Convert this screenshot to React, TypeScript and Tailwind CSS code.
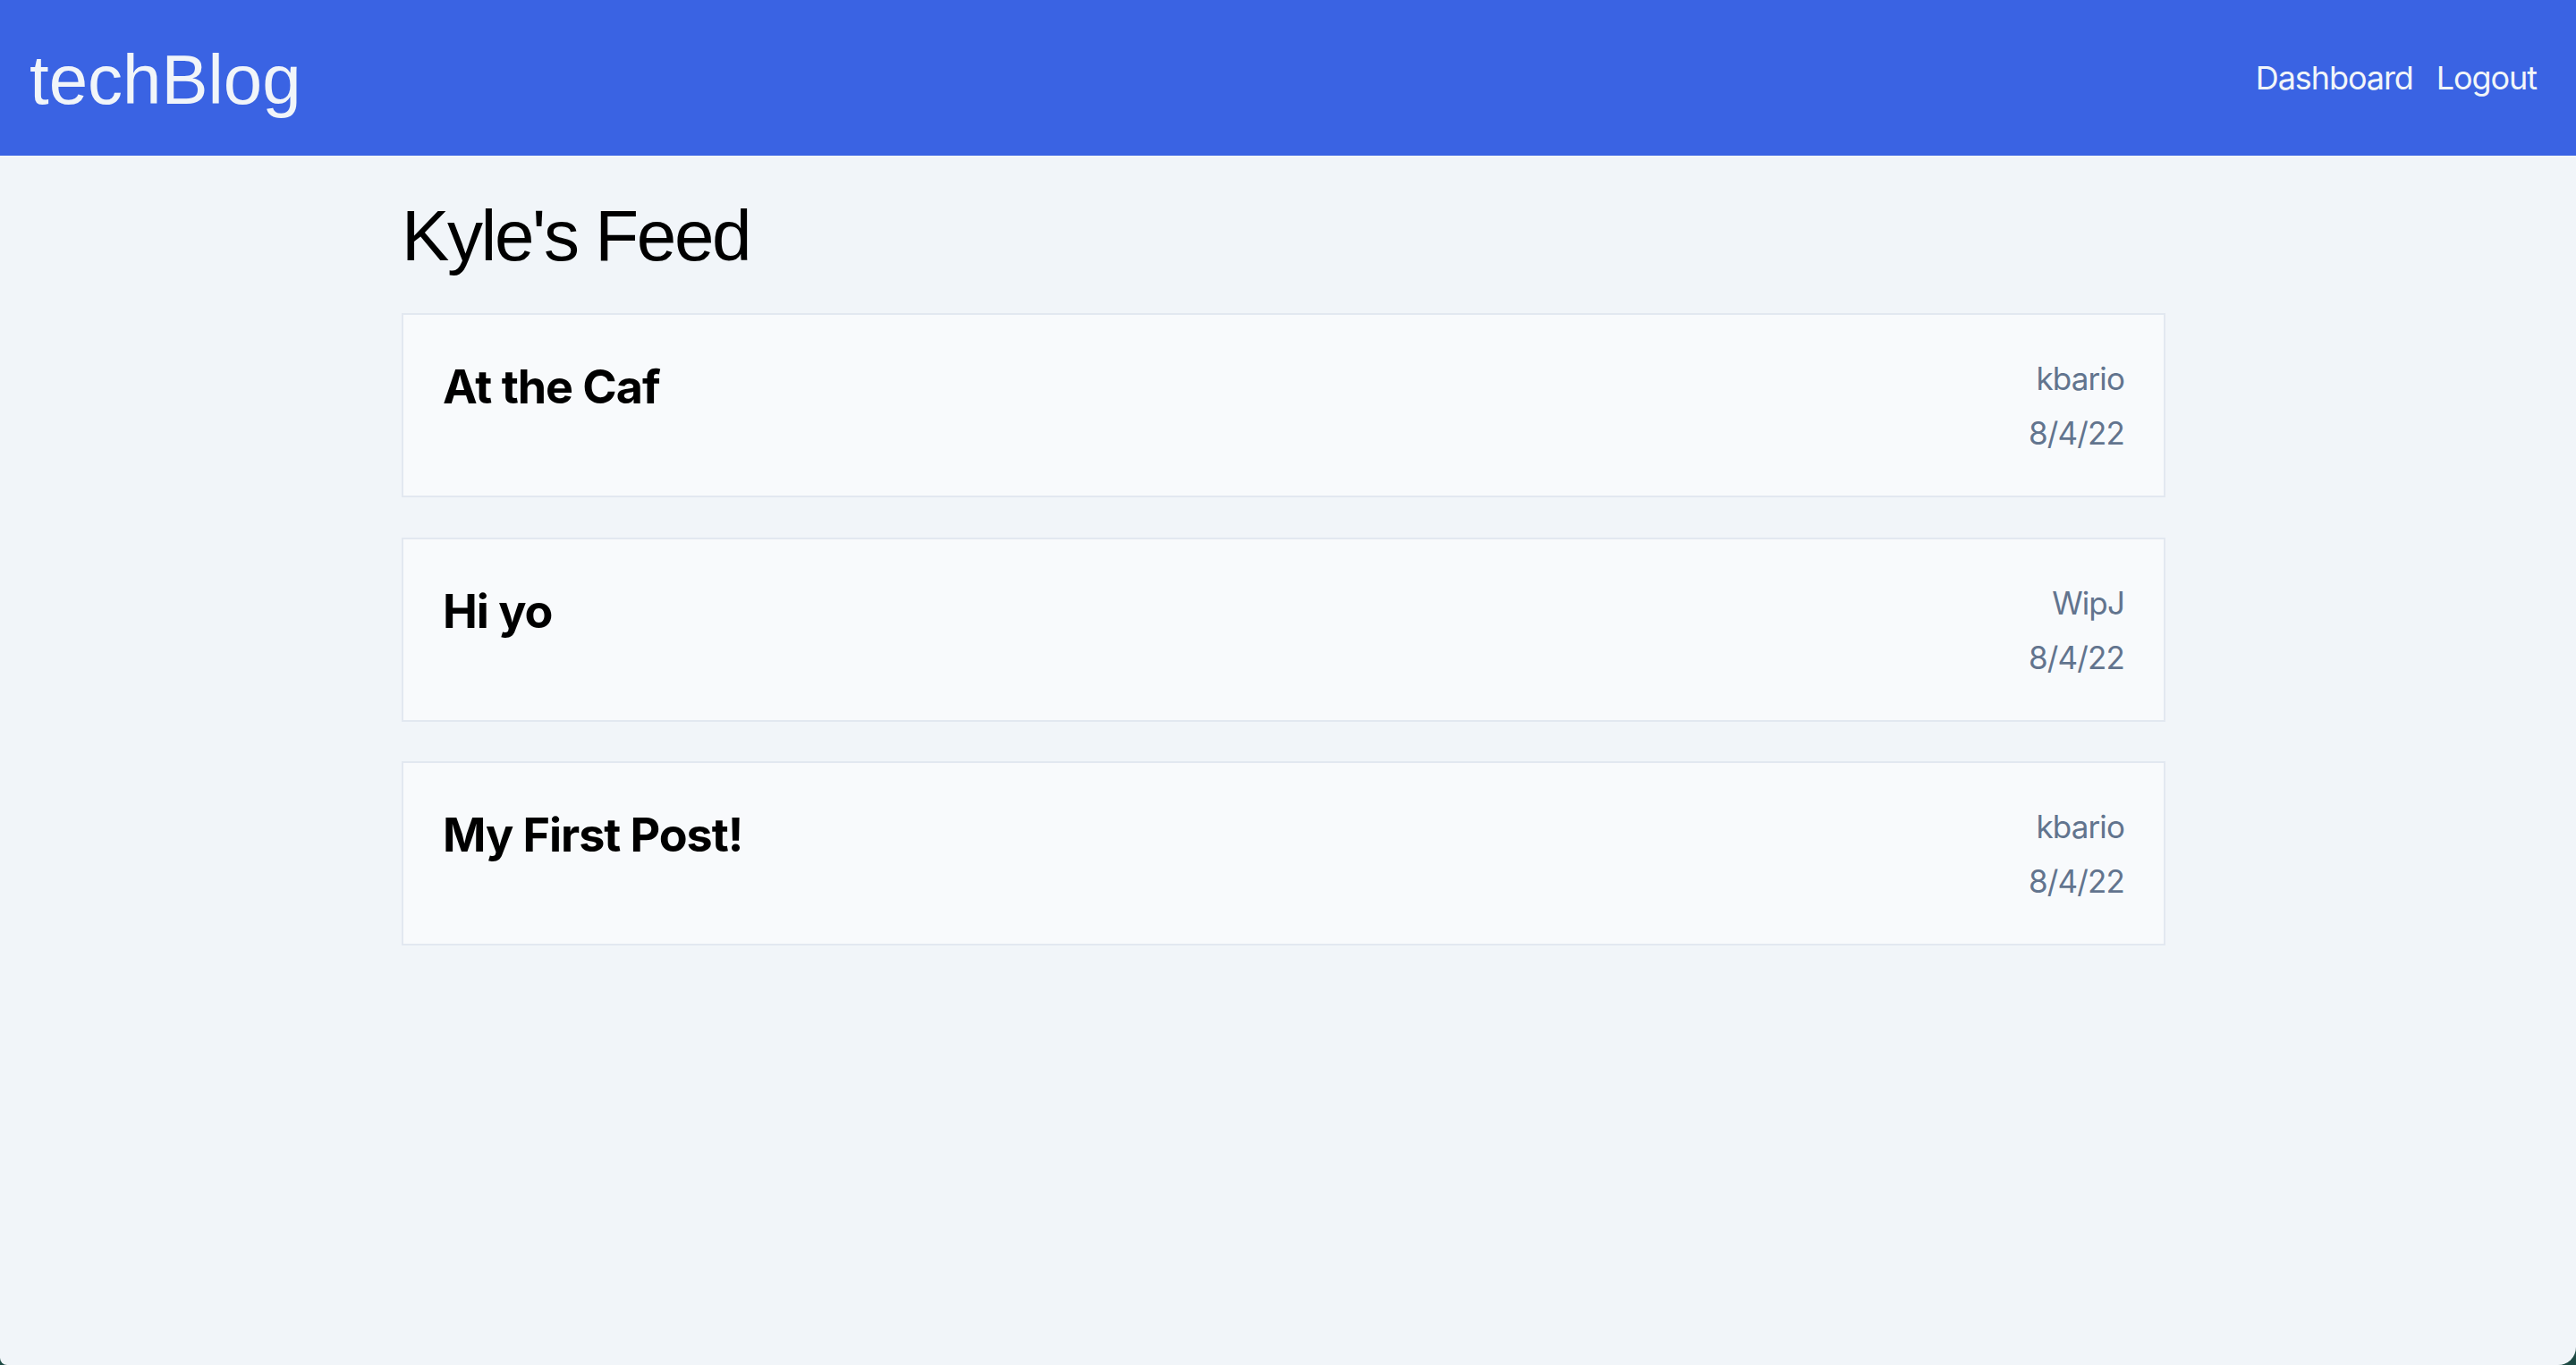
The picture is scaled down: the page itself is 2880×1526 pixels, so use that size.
const posts = [
  { id: 1, title: "At the Caf", author: "kbario", date: "8/4/22" },
  { id: 2, title: "Hi yo", author: "WipJ", date: "8/4/22" },
  { id: 3, title: "My First Post!", author: "kbario", date: "8/4/22" },
];

function PostCard({ title, author, date }: { title: string; author: string; date: string }) {
  return (
    <div className="flex justify-between h-[206px] border-2 border-slate-200 bg-slate-50 px-[44px] pt-[41px]">
      <h2 className="mt-[5px] text-[52px] leading-[70px] font-bold tracking-[-0.02em] text-black font-['Inter',sans-serif]">
        {title}
      </h2>
      <div className="text-right text-[35px] leading-[61px] tracking-[-0.025em] text-slate-500 font-['Inter',sans-serif]">
        <div>{author}</div>
        <div>{date}</div>
      </div>
    </div>
  );
}

export default function App() {
  return (
    <div className="h-screen bg-[#1d4a44]">
      <div className="h-full bg-slate-100 rounded-br-[20px] rounded-bl-[8px] overflow-hidden">
        <header className="flex items-center justify-between h-[174px] bg-[#3a63e3] pl-[33px] pr-[44px]">
          <h1 className="mt-[4px] text-[78px] leading-none text-slate-100 font-['Liberation_Sans',Arial,sans-serif]">
            techBlog
          </h1>
          <nav className="flex items-center gap-[26px] text-[36px] text-slate-100 font-['Inter',sans-serif] tracking-[-0.03em]">
            <a href="#">Dashboard</a>
            <a href="#">Logout</a>
          </nav>
        </header>

        <main className="ml-[449px] w-[1972px] pt-[50px]">
          <h1 className="text-[80px] leading-none tracking-[-0.03em] text-black font-['Liberation_Sans',Arial,sans-serif]">
            Kyle's Feed
          </h1>
          <div className="mt-[46px] flex flex-col gap-[44.5px]">
            {posts.map((p) => (
              <PostCard key={p.id} title={p.title} author={p.author} date={p.date} />
            ))}
          </div>
        </main>
      </div>
    </div>
  );
}
